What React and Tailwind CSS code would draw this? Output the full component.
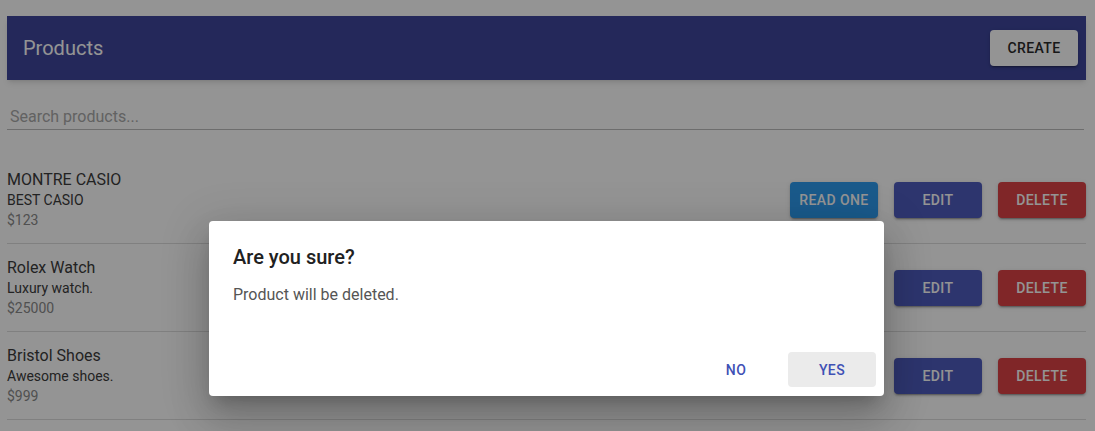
import React from "react";

const products = [
  { name: "MONTRE CASIO", desc: "BEST CASIO", price: "$123", readOne: true },
  { name: "Rolex Watch", desc: "Luxury watch.", price: "$25000" },
  { name: "Bristol Shoes", desc: "Awesome shoes.", price: "$999" },
];

function ActionButton({ className, children }) {
  return (
    <button
      className={`w-[88px] h-[36px] rounded text-sm font-medium uppercase tracking-[0.4px] text-white shadow-[0_3px_1px_-2px_rgba(0,0,0,0.2),0_2px_2px_0_rgba(0,0,0,0.14),0_1px_5px_0_rgba(0,0,0,0.12)] ${className}`}
    >
      {children}
    </button>
  );
}

export default function App() {
  return (
    <div className="relative w-[1095px] h-[431px] overflow-hidden bg-white font-['Roboto',sans-serif]">
      <div className="pt-4 pl-[7px] pr-[9px]">
        <header className="h-16 bg-[#3e469c] flex items-center justify-between pl-4 pr-2 shadow-md">
          <h1 className="text-xl text-white">Products</h1>
          <button className="w-[88px] h-[36px] rounded bg-white text-sm font-medium uppercase tracking-[0.4px] text-[#2a2a2a] shadow-[0_3px_1px_-2px_rgba(0,0,0,0.2),0_2px_2px_0_rgba(0,0,0,0.14),0_1px_5px_0_rgba(0,0,0,0.12)]">
            Create
          </button>
        </header>

        <div className="mt-[24px] h-[26px] mr-[2px] flex items-center border-b border-[#bcbcbc] pl-[3px] text-base text-[#a9a9a9]">
          Search products...
        </div>

        <ul className="mt-[26px]">
          {products.map((p) => (
            <li
              key={p.name}
              className="h-[88px] flex items-center justify-between border-b border-[#ddd]"
            >
              <div className="flex flex-col">
                <span className="text-base leading-5 text-[#3c3c3c]">{p.name}</span>
                <span className="text-sm leading-5 text-[#3c3c3c]">{p.desc}</span>
                <span className="text-sm leading-5 text-[#8a8a8a]">{p.price}</span>
              </div>
              <div className="flex gap-4">
                {p.readOne && <ActionButton className="bg-[#2d9bf0]">Read one</ActionButton>}
                <ActionButton className="bg-[#4f5cbe]">Edit</ActionButton>
                <ActionButton className="bg-[#dc4346]">Delete</ActionButton>
              </div>
            </li>
          ))}
        </ul>
      </div>

      <div className="absolute inset-0 bg-black/[0.42]" />

      <div className="absolute left-[209px] top-[221px] w-[675px] h-[175px] rounded bg-white flex flex-col shadow-[0_11px_15px_-7px_rgba(0,0,0,0.2),0_24px_38px_3px_rgba(0,0,0,0.14),0_9px_46px_8px_rgba(0,0,0,0.12)]">
        <h2 className="mt-6 px-6 text-xl leading-6 font-medium text-[#212121]">Are you sure?</h2>
        <p className="mt-[14px] px-6 text-base leading-6 text-[#555]">Product will be deleted.</p>
        <div className="mt-auto mb-[9px] mr-2 flex justify-end gap-2">
          <button className="w-[88px] h-[35px] rounded text-sm font-medium uppercase tracking-[0.4px] text-[#3f51b5]">
            No
          </button>
          <button className="w-[88px] h-[35px] rounded bg-[#ebebeb] text-sm font-medium uppercase tracking-[0.4px] text-[#3f51b5]">
            Yes
          </button>
        </div>
      </div>
    </div>
  );
}
